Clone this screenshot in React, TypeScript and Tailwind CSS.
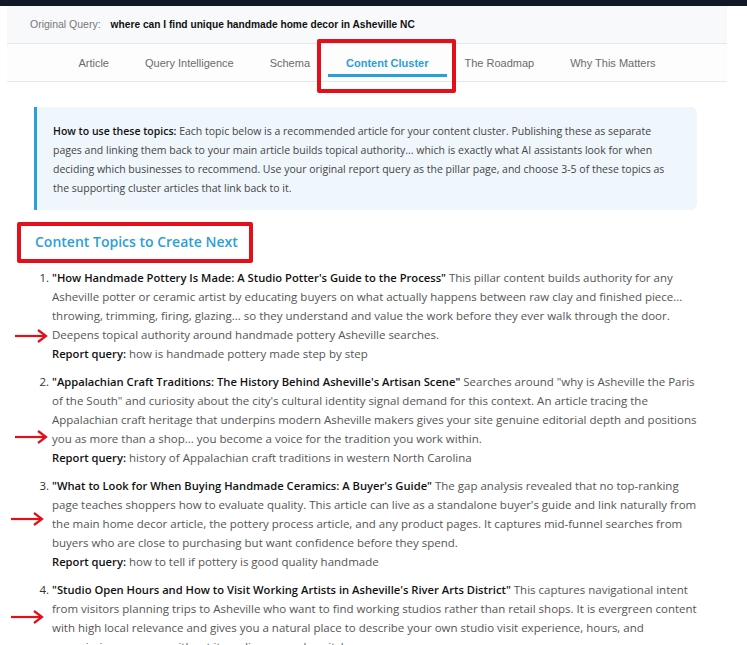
import React from "react";

const tabs = ["Article", "Query Intelligence", "Schema", "Content Cluster", "The Roadmap", "Why This Matters"];

type Topic = {
  title: string;
  lines: string[];
  query: string;
};

const topics: Topic[] = [
  {
    title: "How Handmade Pottery Is Made: A Studio Potter's Guide to the Process",
    lines: [
      " This pillar content builds authority for any",
      "Asheville potter or ceramic artist by educating buyers on what actually happens between raw clay and finished piece...",
      "throwing, trimming, firing, glazing... so they understand and value the work before they ever walk through the door.",
      "Deepens topical authority around handmade pottery Asheville searches.",
    ],
    query: "how is handmade pottery made step by step",
  },
  {
    title: "Appalachian Craft Traditions: The History Behind Asheville's Artisan Scene",
    lines: [
      ' Searches around "why is Asheville the Paris',
      'of the South" and curiosity about the city\'s cultural identity signal demand for this context. An article tracing the',
      "Appalachian craft heritage that underpins modern Asheville makers gives your site genuine editorial depth and positions",
      "you as more than a shop... you become a voice for the tradition you work within.",
    ],
    query: "history of Appalachian craft traditions in western North Carolina",
  },
  {
    title: "What to Look for When Buying Handmade Ceramics: A Buyer's Guide",
    lines: [
      " The gap analysis revealed that no top-ranking",
      "page teaches shoppers how to evaluate quality. This article can live as a standalone buyer's guide and link naturally from",
      "the main home decor article, the pottery process article, and any product pages. It captures mid-funnel searches from",
      "buyers who are close to purchasing but want confidence before they spend.",
    ],
    query: "how to tell if pottery is good quality handmade",
  },
  {
    title: "Studio Open Hours and How to Visit Working Artists in Asheville's River Arts District",
    lines: [
      " This captures navigational intent",
      "from visitors planning trips to Asheville who want to find working studios rather than retail shops. It is evergreen content",
      "with high local relevance and gives you a natural place to describe your own studio visit experience, hours, and",
      "commissions process without it reading as a sales pitch.",
    ],
    query: "how to commission a piece from an Asheville studio",
  },
];

const intro = [
  "Each topic below is a recommended article for your content cluster. Publishing these as separate",
  "pages and linking them back to your main article builds topical authority... which is exactly what AI assistants look for when",
  "deciding which businesses to recommend. Use your original report query as the pillar page, and choose 3-5 of these topics as",
  "the supporting cluster articles that link back to it.",
];

function Arrow({ className }: { className: string }) {
  return (
    <svg className={`absolute ${className}`} width="34" height="14" viewBox="0 0 34 14" fill="none">
      <line x1="1" y1="7" x2="31" y2="7" stroke="#e3101b" strokeWidth="2.2" />
      <polyline points="24,1 32,7 24,13" stroke="#e3101b" strokeWidth="2.2" fill="none" />
    </svg>
  );
}

export default function App() {
  return (
    <div className="relative h-[645px] bg-white overflow-hidden">
      <div className="h-[6px] bg-[#111827]" />

      <div className="ml-[7px] w-[720px]">
        <div className="h-[38px] flex items-center pl-[23px] bg-[#f8f9fa] border-b border-[#e5e7eb] font-['Liberation_Sans',Arial,sans-serif]">
          <span className="text-[10.5px] text-[#777]">Original Query:</span>
          <span className="ml-[10px] text-[10.2px] font-bold text-[#111]">
            where can I find unique handmade home decor in Asheville NC
          </span>
        </div>

        <nav className="h-[38px] flex justify-center border-b border-[#e5e7eb] bg-[#fdfdfd] font-['Liberation_Sans',Arial,sans-serif] text-[11px]">
          {tabs.map((t) =>
            t === "Content Cluster" ? (
              <div key={t} className="relative px-[18px] pt-[1px] flex items-center font-bold text-[#2a9fd8]">
                {t}
                <div className="absolute left-0 right-0 bottom-[4px] h-[3px] bg-[#2a9fd8]" />
              </div>
            ) : (
              <div key={t} className="px-[18px] pt-[1px] flex items-center text-[#6b6b6b]">
                {t}
              </div>
            )
          )}
        </nav>

        <div className="pl-[27px] pr-[30px] pt-[25px] font-['Open_Sans','Noto_Sans',sans-serif]">
          <div className="border-l-[3px] border-[#2aa0da] bg-[#eff7fd] rounded-r-[6px] pl-[16px] pr-[8px] pt-[15px] pb-[12px] text-[10.5px] leading-[19px] text-[#444]">
            {intro.map((l, i) => (
              <div key={i} className="whitespace-nowrap">
                {i === 0 && <b className="font-semibold text-[#111]">How to use these topics: </b>}
                {l}
              </div>
            ))}
          </div>

          <h2 className="mt-[20px] ml-[1px] text-[14px] leading-[24px] font-semibold text-[#2b9fd9]">
            Content Topics to Create Next
          </h2>

          <ol className="mt-[14px] pl-[18px] list-decimal text-[11.5px] leading-[19px] text-[#555] marker:text-[#333]">
            {topics.map((topic) => (
              <li key={topic.title} className="mb-[9px]">
                <span className="whitespace-nowrap">
                  <b className="text-[11.2px] font-semibold text-[#111]">"{topic.title}"</b>
                  {topic.lines[0]}
                </span>
                {topic.lines.slice(1).map((l) => (
                  <span key={l} className="block whitespace-nowrap">
                    {l}
                  </span>
                ))}
                <span className="block">
                  <b className="text-[11.2px] font-semibold text-[#111]">Report query:</b> {topic.query}
                </span>
              </li>
            ))}
          </ol>
        </div>
      </div>

      {/* annotation overlays */}
      <div className="absolute left-[317px] top-[39px] w-[139px] h-[54px] border-[4px] border-[#e3101b] rounded-[2px]" />
      <div className="absolute left-[17px] top-[222px] w-[236px] h-[41px] border-[4px] border-[#e3101b] rounded-[2px]" />
      <Arrow className="left-[14px] top-[329px]" />
      <Arrow className="left-[14px] top-[430px]" />
      <Arrow className="left-[10px] top-[512px]" />
      <Arrow className="left-[10px] top-[610px]" />
    </div>
  );
}
